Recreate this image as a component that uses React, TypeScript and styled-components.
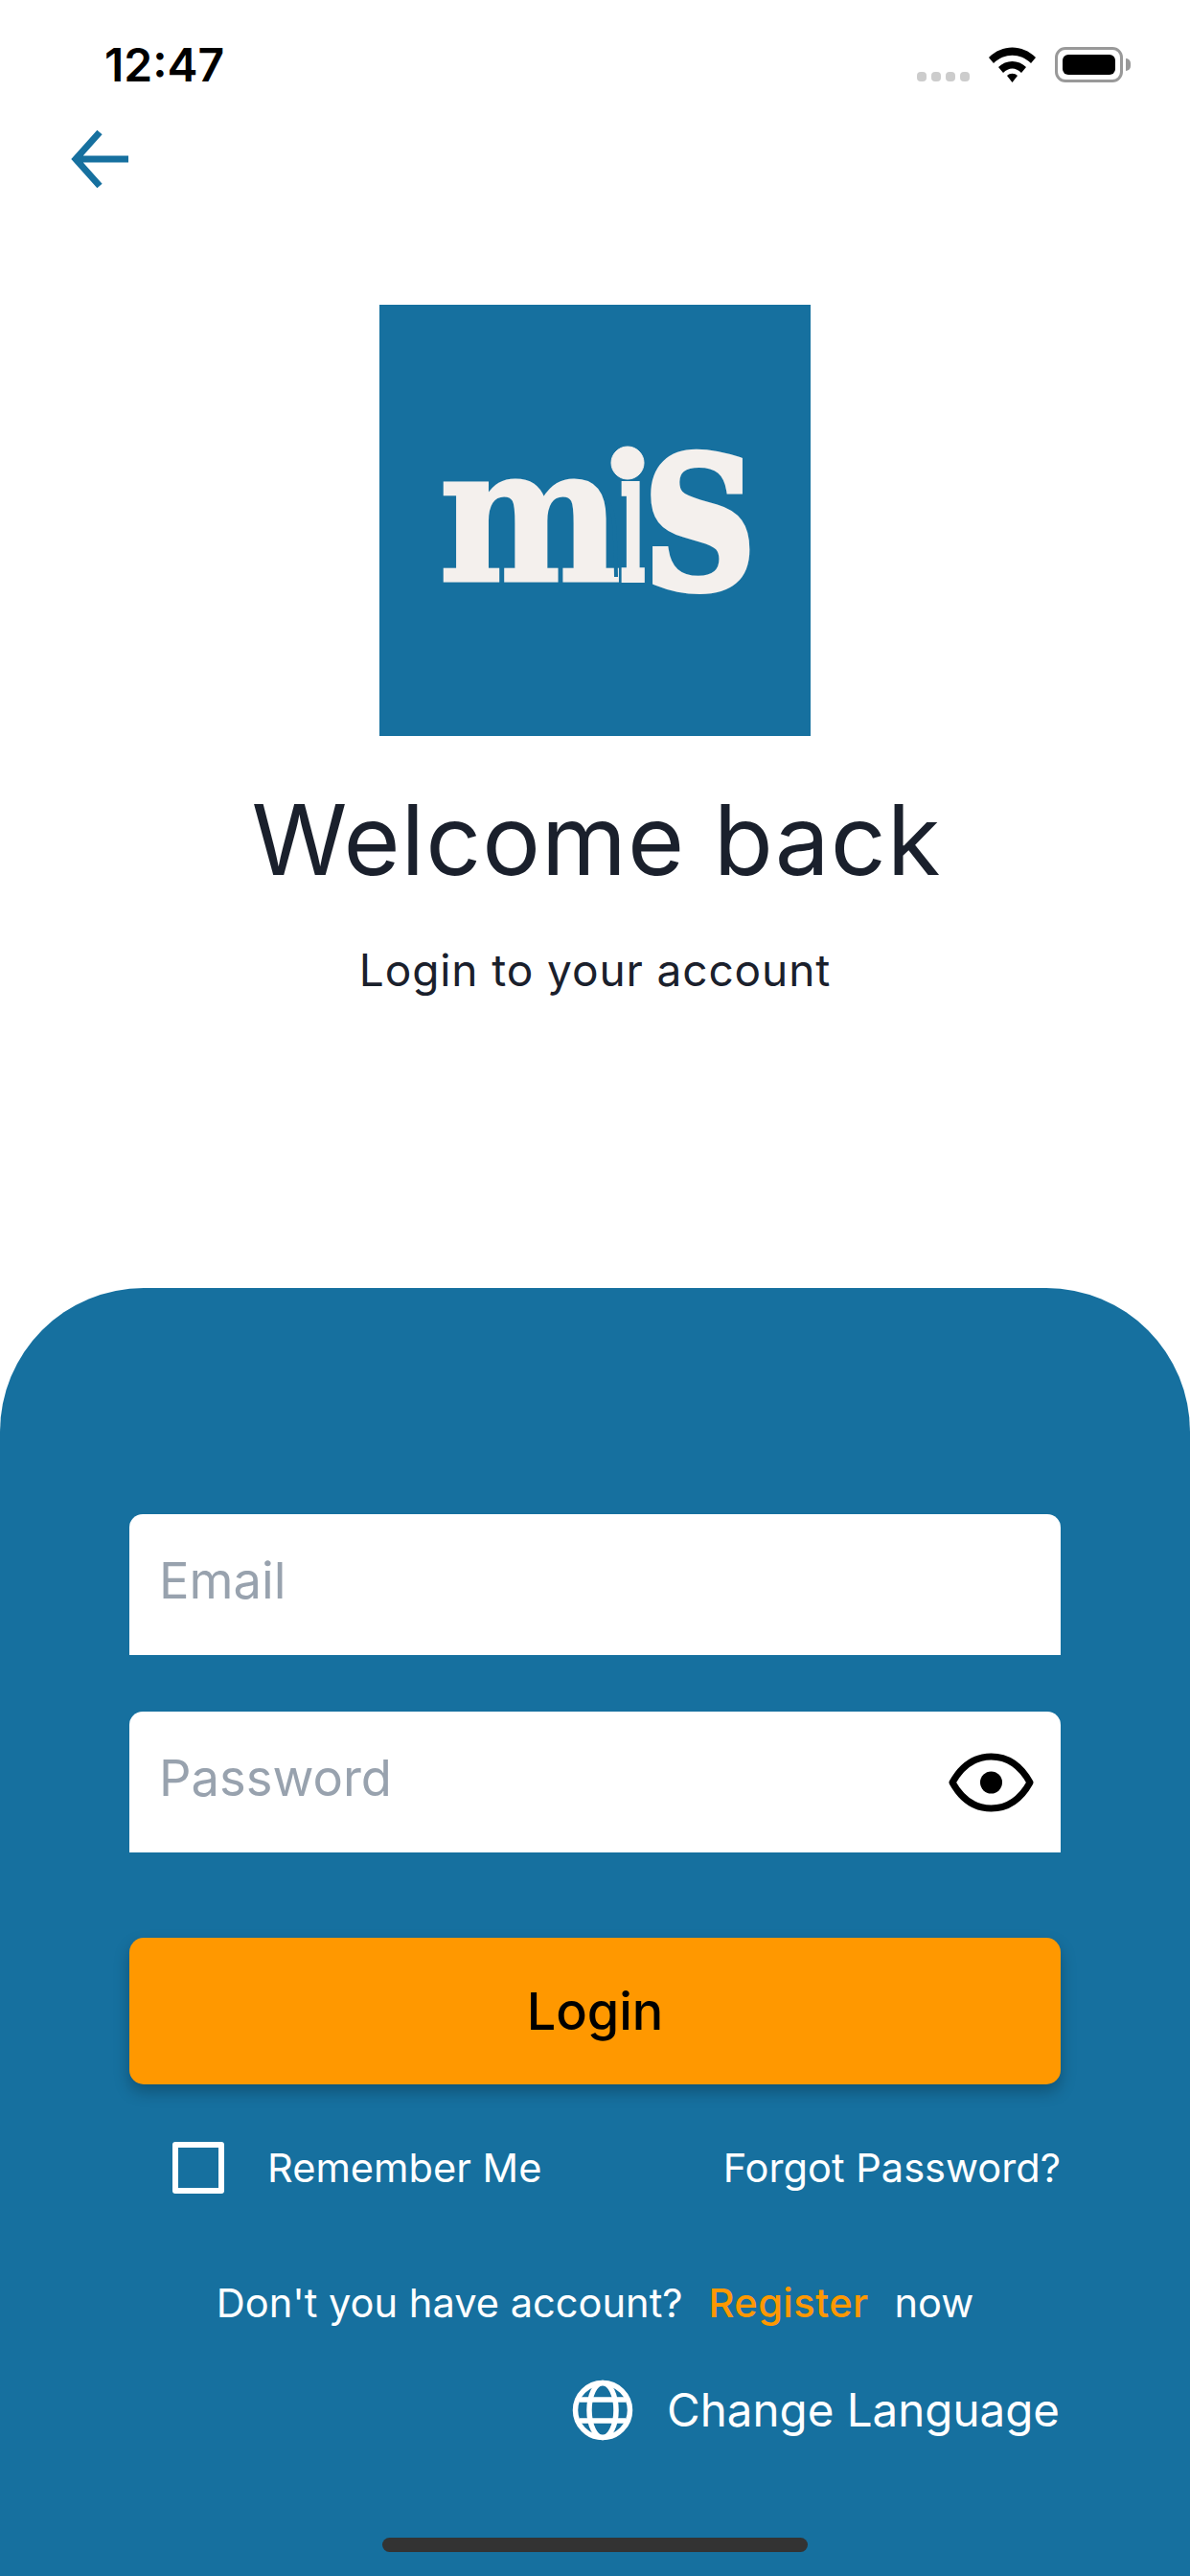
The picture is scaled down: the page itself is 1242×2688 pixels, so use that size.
import styled, { createGlobalStyle } from 'styled-components';

const BLUE = '#16709f';
const ORANGE = '#ff9800';
const LOGO_INK = '#f4f0ed';

const GlobalStyle = createGlobalStyle`
    html, body {
        margin: 0;
        padding: 0;
        background: #fff;
    }
    * {
        box-sizing: border-box;
    }
`

const Logo = () => (
    <LogoSvg viewBox="0 0 450 450">
        <rect width="450" height="450" fill={BLUE} />
        <g fill={LOGO_INK} stroke={LOGO_INK} fontFamily="'DejaVu Serif', serif" fontWeight="700">
            <text transform="translate(62 288) scale(0.92 1)" fontSize="196" strokeWidth="3">m</text>
            <text transform="translate(251 288) scale(0.36 1)" fontSize="196" strokeWidth="4">ı</text>
            <circle cx="259" cy="165" r="17" strokeWidth="1" />
            <text transform="translate(276 295) scale(0.85 1)" fontSize="190" strokeWidth="8">S</text>
        </g>
        <path d="M236 202C245 212 246 225 247 284" fill="none" stroke={BLUE} strokeWidth="4" />
    </LogoSvg>
);

const Eye = () => (
    <EyeSvg viewBox="0 0 89 62">
        <path d="M4 31C14 13 28 4 44.500 4S75 13 85 31C75 49 61 58 44.500 58S14 49 4 31Z" fill="none" stroke="#000" strokeWidth="7" strokeLinejoin="round" />
        <circle cx="44.500" cy="31" r="11.500" fill="#000" />
    </EyeSvg>
);

const Globe = () => (
    <GlobeSvg viewBox="0 0 64 64">
        <g fill="none" stroke="#fff" strokeWidth="5.500">
            <circle cx="32" cy="32" r="28.500" />
            <ellipse cx="32" cy="32" rx="14" ry="28.500" />
            <path d="M8 21H56M8 43H56" />
        </g>
    </GlobeSvg>
);

export default function App() {
    return (
        <Page>
            <GlobalStyle />
            <StatusBar>
                <Time>12:47</Time>
                <StatusIcons>
                    <SignalDots>
                        <Dot /><Dot /><Dot /><Dot />
                    </SignalDots>
                    <svg width="49" height="37" viewBox="0 0 49 37">
                        <path d="M0 11C14 -3 35 -3 49 11L44 17C33 6 16 6 5 17Z" fill="#000" />
                        <path d="M10 21C18 13 31 13 39 21L34 27C28 21 21 21 15 27Z" fill="#000" />
                        <path d="M19 30C22 27 27 27 30 30L24.500 37Z" fill="#000" />
                    </svg>
                    <Battery>
                        <BatteryFill />
                    </Battery>
                </StatusIcons>
            </StatusBar>
            <BackButton>
                <svg width="62" height="62" viewBox="0 0 62 62">
                    <path d="M60 31H6M30 3L5 31L30 59" fill="none" stroke={BLUE} strokeWidth="7" />
                </svg>
            </BackButton>
            <Header>
                <Logo />
                <Title>Welcome back</Title>
                <Subtitle>Login to your account</Subtitle>
            </Header>
            <Panel>
                <Field>
                    <Placeholder>Email</Placeholder>
                </Field>
                <Field $gap>
                    <Placeholder>Password</Placeholder>
                    <Eye />
                </Field>
                <LoginButton>Login</LoginButton>
                <ActionsRow>
                    <Remember>
                        <Checkbox />
                        <SmallText>Remember Me</SmallText>
                    </Remember>
                    <SmallText>Forgot Password?</SmallText>
                </ActionsRow>
                <RegisterRow>
                    <SmallText>Don't you have account?</SmallText>
                    <RegisterLink>Register</RegisterLink>
                    <SmallText>now</SmallText>
                </RegisterRow>
                <LanguageRow>
                    <Globe />
                    <LanguageText>Change Language</LanguageText>
                </LanguageRow>
                <HomeBar />
            </Panel>
        </Page>
    );
}

const Page = styled.div`
    width: 1242px;
    height: 2688px;
    display: flex;
    flex-direction: column;
    overflow: hidden;
    background: #fff;
    font-family: Inter, "Liberation Sans", sans-serif;
`

const StatusBar = styled.div`
    height: 135px;
    flex: none;
    display: flex;
    justify-content: space-between;
    align-items: flex-start;
    padding: 40px 70px 0 109px;
`

const Time = styled.span`
    font-size: 48px;
    line-height: 56px;
    font-weight: 600;
    color: #000;
`

const StatusIcons = styled.div`
    display: flex;
    align-items: flex-end;
    gap: 20px;
    margin-top: 9px;
`

const SignalDots = styled.div`
    display: flex;
    gap: 5px;
    margin-bottom: 1px;
`

const Dot = styled.div`
    width: 10px;
    height: 10px;
    border-radius: 4px;
    background: #ccc;
`

const Battery = styled.div`
    position: relative;
    width: 71px;
    height: 37px;
    padding: 5px;
    border: 3px solid #999;
    border-radius: 11px;
    &::after {
        content: '';
        position: absolute;
        right: -11px;
        top: 9px;
        width: 5px;
        height: 13px;
        border-radius: 0 6px 6px 0;
        background: #999;
    }
`

const BatteryFill = styled.div`
    width: 100%;
    height: 100%;
    border-radius: 6px;
    background: #000;
`

const BackButton = styled.div`
    flex: none;
    height: 183px;
    padding-left: 74px;
`

const Header = styled.div`
    flex: none;
    height: 1026px;
    display: flex;
    flex-direction: column;
    align-items: center;
`

const LogoSvg = styled.svg`
    width: 450px;
    height: 450px;
    flex: none;
`

const Title = styled.h1`
    margin: 45px 0 0 3px;
    font-size: 101.500px;
    line-height: 126px;
    font-weight: 400;
    letter-spacing: 1px;
    color: #1a202c;
`

const Subtitle = styled.p`
    margin: 43px 0 0;
    font-size: 46px;
    line-height: 60px;
    font-weight: 400;
    letter-spacing: 0.9px;
    color: #1a202c;
`

const Panel = styled.div`
    flex: 1;
    display: flex;
    flex-direction: column;
    padding: 236px 135px 0;
    background: ${BLUE};
    border-radius: 150px 150px 0 0;
`

const Field = styled.div<{ $gap?: boolean }>`
    height: 147px;
    flex: none;
    margin-top: ${p => (p.$gap ? '59px' : '0')};
    display: flex;
    align-items: center;
    justify-content: space-between;
    padding: 0 28px 0 31px;
    background: #fff;
    border-radius: 14px 14px 0 0;
`

const Placeholder = styled.span`
    font-size: 52.500px;
    line-height: 60px;
    margin-top: -10px;
    color: #98a2ae;
`

const EyeSvg = styled.svg`
    width: 89px;
    height: 62px;
`

const LoginButton = styled.div`
    height: 153px;
    flex: none;
    margin-top: 89px;
    display: flex;
    align-items: center;
    justify-content: center;
    border-radius: 15px;
    background: ${ORANGE};
    box-shadow: 0 8px 16px rgba(0, 0, 0, 0.25);
    font-size: 54px;
    font-weight: 500;
    color: #000;
`

const ActionsRow = styled.div`
    flex: none;
    height: 54px;
    margin-top: 60px;
    padding: 0 0 0 45px;
    display: flex;
    align-items: center;
    justify-content: space-between;
`

const Remember = styled.div`
    display: flex;
    align-items: center;
    gap: 45px;
`

const Checkbox = styled.div`
    width: 54px;
    height: 54px;
    border: 6px solid #fff;
    border-radius: 3px;
`

const SmallText = styled.span`
    font-size: 41.600px;
    line-height: 53px;
    color: #fff;
`

const RegisterRow = styled.div`
    flex: none;
    margin-top: 88px;
    margin-bottom: 1px;
    display: flex;
    justify-content: center;
    gap: 27px;
`

const RegisterLink = styled(SmallText)`
    color: ${ORANGE};
    font-weight: 500;
    letter-spacing: 0.4px;
`

const LanguageRow = styled.div`
    flex: none;
    margin-top: 52px;
    padding-right: 1px;
    display: flex;
    align-items: center;
    justify-content: flex-end;
    gap: 35px;
`

const GlobeSvg = styled.svg`
    width: 64px;
    height: 64px;
`

const LanguageText = styled.span`
    font-size: 47.500px;
    line-height: 64px;
    color: #fff;
`

const HomeBar = styled.div`
    flex: none;
    width: 444px;
    height: 15px;
    margin: 101px auto 0;
    border-radius: 8px;
    background: #333;
`
